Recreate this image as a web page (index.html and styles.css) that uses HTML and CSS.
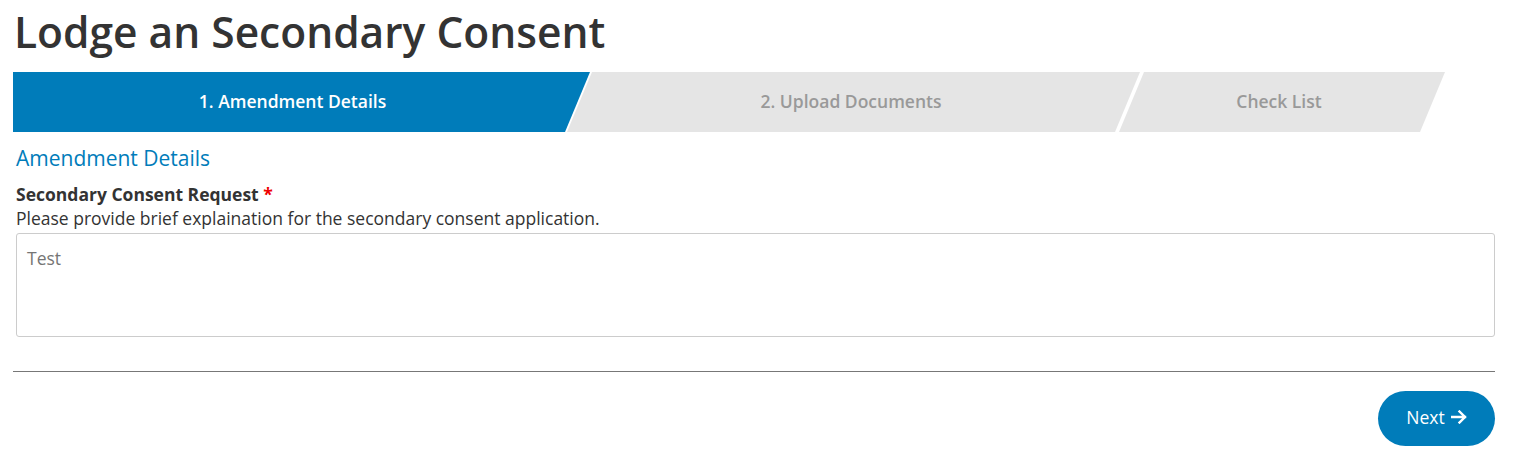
FILE: index.html
```html
<!DOCTYPE html>
<html lang="en">
<head>
<meta charset="utf-8">
<title>Lodge an Secondary Consent</title>
<link rel="stylesheet" href="styles.css">
</head>
<body>
<main class="page">
  <h1 class="title">Lodge an Secondary Consent</h1>
  <nav class="steps">
    <div class="step step-first active">1. Amendment Details</div>
    <div class="step step-mid">2. Upload Documents</div>
    <div class="step step-last">Check List</div>
  </nav>
  <section class="form">
    <h2 class="section-title">Amendment Details</h2>
    <label class="field-label" for="req">Secondary Consent Request <span class="req">*</span></label>
    <p class="help">Please provide brief explaination for the secondary consent application.</p>
    <textarea id="req" class="textarea">Test</textarea>
  </section>
  <hr class="divider">
  <div class="actions">
    <button class="btn-next" type="button">Next <svg class="arrow" width="16" height="14" viewBox="0 0 16 14"><path d="M1 7h13M8.5 1.5L14 7l-5.5 5.5" fill="none" stroke="#fff" stroke-width="2.4" stroke-linecap="square"/></svg></button>
  </div>
</main>
</body>
</html>
```
FILE: styles.css
```css
html, body {
  margin: 0;
  padding: 0;
  background: #fff;
}
body {
  font-family: "Open Sans", "Liberation Sans", sans-serif;
  color: #333;
}
.page {
  padding: 0 19px 0 13px;
}
.title {
  margin: 0;
  padding: 4px 0 0 1px;
  font-size: 42.5px;
  font-weight: 600;
  line-height: 56px;
  color: #333;
  letter-spacing: 0;
}
.steps {
  display: flex;
  margin-top: 12px;
  height: 60px;
}
.step {
  display: flex;
  align-items: center;
  justify-content: center;
  padding-bottom: 3px;
  box-sizing: border-box;
  font-size: 17.5px;
  font-weight: 600;
  background: #e5e5e5;
  color: #999;
  flex: none;
}
.step.active {
  background: #007cba;
  color: #fff;
}
.step-first {
  width: 577px;
  padding-right: 18px;
  clip-path: polygon(0 0, 100% 0, calc(100% - 25px) 100%, 0 100%);
}
.step-mid {
  width: 573px;
  margin-left: -23px;
  padding-right: 5px;
  clip-path: polygon(25px 0, 100% 0, calc(100% - 25px) 100%, 0 100%);
}
.step-last {
  width: 326px;
  margin-left: -21px;
  padding-right: 6px;
  clip-path: polygon(25px 0, 100% 0, calc(100% - 25px) 100%, 0 100%);
}
.form {
  padding: 0 0 0 3px;
}
.section-title {
  margin: 12px 0 0;
  font-size: 21px;
  font-weight: 400;
  line-height: 28px;
  color: #007cba;
}
.field-label {
  display: block;
  margin-top: 10px;
  font-size: 17.5px;
  font-weight: 700;
  line-height: 24px;
  color: #333;
}
.req {
  color: #e00;
}
.help {
  margin: 0;
  font-size: 17.5px;
  line-height: 24px;
  color: #333;
}
.textarea {
  display: block;
  box-sizing: border-box;
  width: 100%;
  height: 104px;
  margin-top: 3px;
  padding: 12px 10px;
  border: 1px solid #ccc;
  border-radius: 3px;
  font-family: "Open Sans", "Liberation Sans", sans-serif;
  font-size: 17.5px;
  line-height: 24px;
  color: #757575;
  resize: none;
  outline: none;
}
.divider {
  margin: 34px 0 0;
  border: 0;
  border-top: 1px solid #777;
}
.actions {
  display: flex;
  justify-content: flex-end;
  margin-top: 19px;
}
.btn-next {
  display: flex;
  align-items: center;
  gap: 6px;
  width: 117px;
  height: 55px;
  padding: 0 0 4px;
  justify-content: center;
  border: 0;
  border-radius: 28px;
  background: #007cba;
  color: #fff;
  font-family: "Open Sans", "Liberation Sans", sans-serif;
  font-size: 17.5px;
  font-weight: 400;
  cursor: pointer;
}
.arrow {
  display: block;
}
```
